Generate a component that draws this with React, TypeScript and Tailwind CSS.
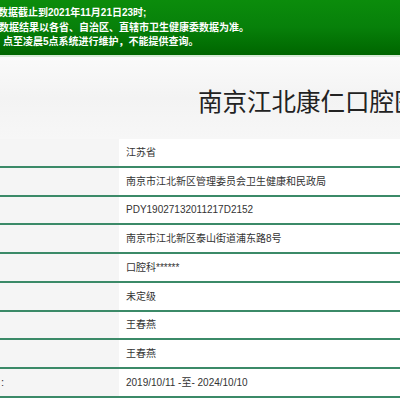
import React from "react";

const rows: { label: string; value: string }[] = [
  { label: "", value: "江苏省" },
  { label: "", value: "南京市江北新区管理委员会卫生健康和民政局" },
  { label: "", value: "PDY19027132011217D2152" },
  { label: "", value: "南京市江北新区泰山街道浦东路8号" },
  { label: "", value: "口腔科******" },
  { label: "", value: "未定级" },
  { label: "", value: "王春燕" },
  { label: "", value: "王春燕" },
  { label: ":", value: "2019/10/11 -至- 2024/10/10" },
];

export default function App() {
  return (
    <div
      className="w-[400px] h-[400px] overflow-hidden bg-white"
      style={{ fontFamily: '"Liberation Sans", "Noto Sans CJK SC", sans-serif' }}
    >
      <div className="h-[55px] bg-gradient-to-b from-[#0b8c0b] via-[#07800a] to-[#006600] pt-[6px] text-white text-[10px] leading-[14.5px] font-bold whitespace-nowrap overflow-hidden">
        <div className="-ml-[2px]">数据截止到2021年11月21日23时;</div>
        <div className="-ml-[1px]">数据结果以各省、自治区、直辖市卫生健康委数据为准。</div>
        <div className="ml-[3px]">点至凌晨5点系统进行维护，不能提供查询。</div>
      </div>
      <div className="h-[2px] bg-[#d6ead6]" />
      <div className="h-[82px] bg-gradient-to-b from-[#fafafa] via-[#f3f3f3] to-[#f7f7f7] pl-[198px] pt-[28px] whitespace-nowrap overflow-hidden">
        <span
          className="text-[24.5px] leading-[32px] text-[#222]"
          style={{ fontFamily: '"Noto Sans CJK SC", sans-serif' }}
        >
          南京江北康仁口腔医院
        </span>
      </div>
      <div className="flex flex-col">
        {rows.map((r, i) => (
          <div
            key={i}
            className="h-[28.75px] flex border-b-2 border-[#3b8a68] shrink-0"
          >
            <div className="w-[119px] bg-[#f5f5f5] text-[11px] text-[#333] flex items-center pl-[1px]">
              {r.label}
            </div>
            <div className="flex-1 bg-white text-[10px] text-[#333] flex items-center pl-[7px] whitespace-nowrap overflow-hidden">
              {r.value}
            </div>
          </div>
        ))}
      </div>
    </div>
  );
}
